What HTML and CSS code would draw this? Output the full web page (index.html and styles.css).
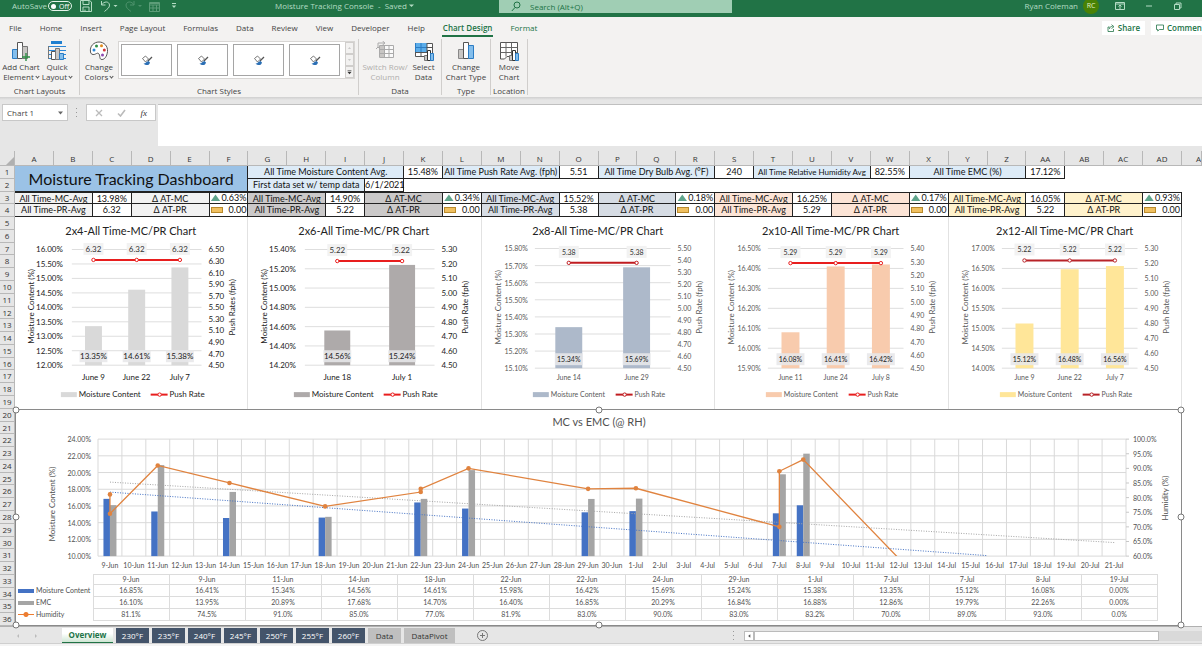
FILE: index.html
```html
<!DOCTYPE html>
<html lang="en">
<head>
<meta charset="utf-8">
<title>Moisture Tracking Console</title>
<link rel="stylesheet" href="styles.css">
</head>
<body>
<header class="titlebar">
  <div class="quick">
    <label class="autosave" for="autosave">AutoSave</label>
    <button class="toggle" id="autosave" type="button"><i></i>Off</button>
    <svg class="q-save" width="12" height="12" viewBox="0 0 12 12"><path d="M.5.5h9l2 1.500v9.500h-11zM3 .5v4h6v-4M3 11.500v-4.500h6v4.500M5 9.500v2"/></svg>
    <svg class="q-undo" width="18" height="12" viewBox="0 0 18 12"><path d="M1.500 1v4h4M1.500 5C4 1 9 1 9.500 5C9.700 8 7 9 4.500 11.500"/><path class="solid" d="M13.500 5h4l-2 2z"/></svg>
    <svg class="q-redo" width="18" height="12" viewBox="0 0 18 12"><path d="M9 1v4h-4M9 5C7 1 1.500 1 1 5C1 8 3 9 6 11.500"/><path class="solid" d="M13 5h4l-2 2z"/></svg>
    <svg class="q-table" width="12" height="11" viewBox="0 0 12 11"><path d="M.5 1.500h10v9h-10zM.5 4h10M.5 7h10M4 4v6.500M7.500 4v6.500M1 2.500h9"/></svg>
    <svg class="q-more" width="6" height="6" viewBox="0 0 6 6"><path d="M1 .5h4"/><path class="solid" d="M.8 2.500h4.400l-2.200 2.500z"/></svg>
  </div>
  <div class="doc">Moisture Tracking Console&nbsp; -&nbsp; Saved&nbsp; <svg width="5" height="4" viewBox="0 0 5 4"><path class="solid" d="M0 .5h5l-2.500 2.500z"/></svg></div>
  <div class="search">
    <svg width="10" height="11" viewBox="0 0 10 11"><circle cx="6" cy="4" r="3"/><path d="M4 6.500L.8 10"/></svg>
    <input type="text" aria-label="Search" placeholder="Search (Alt+Q)">
  </div>
  <div class="account">
    <span class="user">Ryan Coleman</span><span class="avatar">RC</span>
    <svg width="10" height="8" viewBox="0 0 10 8"><path d="M.5.5h9v7h-9zM.5 2h9M5 7V3M3.500 4.500L5 3l1.500 1.500"/></svg>
    <svg width="10" height="8" viewBox="0 0 10 8"><path d="M2 4h6"/></svg>
    <svg width="10" height="8" viewBox="0 0 10 8"><path d="M1.500 2.500h5v5h-5zM3 2.500V1h5v5H6.500"/></svg>
  </div>
</header>

<nav class="tabs">
  <button type="button">File</button><button type="button">Home</button><button type="button">Insert</button><button type="button">Page Layout</button><button type="button">Formulas</button><button type="button">Data</button><button type="button">Review</button><button type="button">View</button><button type="button">Developer</button><button type="button">Help</button><button type="button" class="ctx on">Chart Design</button><button type="button" class="ctx">Format</button>
  <span class="grow"></span>
  <button type="button" class="chip"><svg width="8" height="8" viewBox="0 0 8 8"><path d="M2.500 3H1v4.500h5.500V5M2.500 5c0-2 1-2.500 3-2.500M4.500.7l2.500 2-2.500 1.800"/></svg>Share</button>
  <button type="button" class="chip wide"><svg width="8" height="8" viewBox="0 0 8 8"><path d="M.5 1h7v4.500H3.500L1.700 7V5.500H.5z"/></svg>Comments</button>
</nav>

<section class="ribbon">
  <div class="group g-layouts">
    <div class="tools">
      <button type="button" class="tool">
        <svg width="20" height="20" viewBox="0 0 20 20"><path fill="#83beec" stroke="#2b7cc4" d="M1.500 8.500h5v9h-5z"/><path fill="#fff" stroke="#555" d="M6.500 1.500h5v16h-5z"/><path fill="#c8c6c4" stroke="#777" d="M11.500 5.500h5v12h-5z"/><path stroke="#2f8f46" stroke-width="1.400" d="M15 12v8M11 16h8"/></svg>
        <span>Add Chart<br>Element <b></b></span></button>
      <button type="button" class="tool">
        <svg width="20" height="20" viewBox="0 0 20 20"><path fill="#1e7fd0" d="M4 0h11v3H4z"/><path stroke="#2b88d8" d="M1 5.500h18M1 9.500h18M1 13.500h18M1 17.500h18"/><path stroke="#777" d="M1.500 5v13"/><path fill="#fff" stroke="#555" d="M4.500 10.500h4v8h-4z"/><path fill="#c8c6c4" stroke="#777" d="M8.500 7.500h4v11h-4z"/><path fill="#83beec" stroke="#2b7cc4" d="M12.500 12.500h4v6h-4z"/></svg>
        <span>Quick<br>Layout <b></b></span></button>
    </div>
    <h2>Chart Layouts</h2>
  </div>
  <div class="group g-styles">
    <div class="tools">
      <button type="button" class="tool">
        <svg width="20" height="20" viewBox="0 0 20 20"><path fill="#fff" stroke="#555" d="M1.500 11C.5 5 5 1 10 1s9 4 8.500 9.500C18 15.500 15.500 18.500 13 18.500c-3 0-1.500-3-3-5.500-1.500-2.300-3.500 1-6 .5C2.500 13.200 1.700 12.500 1.500 11z"/><circle cx="5" cy="9" r="1.500" fill="#2b88d8"/><circle cx="7.500" cy="5" r="1.500" fill="#2f8f46"/><circle cx="12.500" cy="4.800" r="1.500" fill="#e08a1e"/><circle cx="15.300" cy="9" r="1.500" fill="#d13438"/><circle cx="13.500" cy="14" r="1.500" fill="#8e4bb0"/></svg>
        <span>Change<br>Colors <b></b></span></button>
      <div class="gallery">
        <button type="button" aria-label="Style 1"><svg width="12" height="11" viewBox="0 0 12 11"><path fill="#fff" stroke="#555" stroke-width=".8" d="M1.500 3.500l3-2.500 3 3-3 3z"/><path stroke="#555" stroke-width="1.200" d="M7 6l4-4"/><path fill="#2b6fb5" d="M2.500 8.500c2 .5 3-2.500 5-2.500l1.500 1.500c-.5 3-4 3.500-6.500 1z"/></svg></button>
        <button type="button" aria-label="Style 2"><svg width="12" height="11" viewBox="0 0 12 11"><path fill="#fff" stroke="#555" stroke-width=".8" d="M1.500 3.500l3-2.500 3 3-3 3z"/><path stroke="#555" stroke-width="1.200" d="M7 6l4-4"/><path fill="#2b6fb5" d="M2.500 8.500c2 .5 3-2.500 5-2.500l1.500 1.500c-.5 3-4 3.500-6.500 1z"/></svg></button>
        <button type="button" aria-label="Style 3"><svg width="12" height="11" viewBox="0 0 12 11"><path fill="#fff" stroke="#555" stroke-width=".8" d="M1.500 3.500l3-2.500 3 3-3 3z"/><path stroke="#555" stroke-width="1.200" d="M7 6l4-4"/><path fill="#2b6fb5" d="M2.500 8.500c2 .5 3-2.500 5-2.500l1.500 1.500c-.5 3-4 3.500-6.500 1z"/></svg></button>
        <button type="button" aria-label="Style 4"><svg width="12" height="11" viewBox="0 0 12 11"><path fill="#fff" stroke="#555" stroke-width=".8" d="M1.500 3.500l3-2.500 3 3-3 3z"/><path stroke="#555" stroke-width="1.200" d="M7 6l4-4"/><path fill="#2b6fb5" d="M2.500 8.500c2 .5 3-2.500 5-2.500l1.500 1.500c-.5 3-4 3.500-6.500 1z"/></svg></button>
        <div class="spin">
          <svg viewBox="0 0 9 12"><path fill="#bbb" d="M2.500 7h4l-2-2z"/></svg>
          <svg viewBox="0 0 9 12"><path fill="#bbb" d="M2.500 5h4l-2 2z"/></svg>
          <svg viewBox="0 0 9 12"><path stroke="#333" d="M2 4.500h5"/><path fill="#333" d="M2 6h5l-2.500 3z"/></svg>
        </div>
      </div>
    </div>
    <h2>Chart Styles</h2>
  </div>
  <div class="group g-data">
    <div class="tools">
      <button type="button" class="tool" disabled>
        <svg width="20" height="20" viewBox="0 0 20 20"><path fill="#fafafa" stroke="#aaa" d="M4.500 4.500h14v12h-14z"/><path fill="#c8c6c4" d="M5 5h4v11H5z"/><path stroke="#aaa" d="M4.500 8.500h14M4.500 12.500h14M9.500 4.500v12M14 4.500v12M1 8l2-2 2 2M3 6v-4h6M7.500 0L10 2 7.500 4"/></svg>
        <span>Switch Row/<br>Column</span></button>
      <button type="button" class="tool">
        <svg width="20" height="20" viewBox="0 0 20 20"><path fill="#fff" stroke="#555" d="M1.500 2.500h17v13h-17z"/><path fill="#5badea" d="M1 2h12v9H1z"/><path stroke="#2b7cc4" d="M1.500 2v9M1 6.500h12M7 2v9"/><path stroke="#555" d="M13 6.500h5.500M1 11.500h12M7 11v4.500M13 2v9"/><path fill="#c8c6c4" stroke="#777" d="M10.500 14.500h3v5h-3z"/><path fill="#fff" stroke="#333" d="M13.500 9.500h3v10h-3z"/><path fill="#83beec" stroke="#2b7cc4" d="M16.500 12.500h3v7h-3z"/></svg>
        <span>Select<br>Data</span></button>
    </div>
    <h2>Data</h2>
  </div>
  <div class="group g-type">
    <div class="tools">
      <button type="button" class="tool">
        <svg width="20" height="20" viewBox="0 0 20 20"><path fill="#c8c6c4" stroke="#888" d="M2.500 8.500h5v9h-5z"/><path fill="#fff" stroke="#555" d="M7.500 1.500h5v16h-5z"/><path fill="#83beec" stroke="#2b7cc4" d="M12.500 4.500h5v13h-5z"/></svg>
        <span>Change<br>Chart Type</span></button>
    </div>
    <h2>Type</h2>
  </div>
  <div class="group g-loc">
    <div class="tools">
      <button type="button" class="tool">
        <svg width="20" height="20" viewBox="0 0 20 20"><path fill="#fff" stroke="#555" d="M1.500 1.500h17v14H8l-2.500 2.500h-4z"/><path stroke="#666" d="M1.500 6.500h17M1.500 11.500h17M7 1.500v14M12.500 1.500v14"/><path fill="#c8c6c4" stroke="#777" d="M10.500 14.500h3v5h-3z"/><path fill="#fff" stroke="#333" d="M13.500 9.500h3v10h-3z"/><path fill="#83beec" stroke="#2b7cc4" d="M16.500 12.500h3v7h-3z"/></svg>
        <span>Move<br>Chart</span></button>
    </div>
    <h2>Location</h2>
  </div>
</section>

<section class="formula">
  <div class="namebox"><input type="text" aria-label="Name box" value="Chart 1"><svg width="5" height="4" viewBox="0 0 5 4"><path fill="#666" d="M0 .5h5l-2.500 3z"/></svg></div>
  <svg class="grip" width="4" height="10" viewBox="0 0 4 10"><path fill="#999" d="M1 0h1v1H1zM1 4h1v1H1zM1 8h1v1H1z"/></svg>
  <div class="fx">
    <svg width="8" height="8" viewBox="0 0 8 8"><path stroke="#bbb" stroke-width="1.300" d="M1 1l6 6M7 1L1 7"/></svg>
    <svg width="9" height="8" viewBox="0 0 9 8"><path stroke="#bbb" stroke-width="1.600" d="M1 4.500L3.500 7 8 1"/></svg>
    <em>fx</em>
  </div>
  <textarea aria-label="Formula bar"></textarea>
</section>

<main class="sheet">
<table class="grid">
  <thead><tr id="letters"><th class="corner"><svg width="8" height="8" viewBox="0 0 8 8"><path fill="#b0b0b0" d="M8 0v8H0z"/></svg></th></tr></thead>
  <tbody id="cells">
    <tr><th>1</th>
      <td class="s6 title">Moisture Tracking Dashboard</td>
      <td class="s4 head">All Time Moisture Content Avg.</td><td>15.48%</td>
      <td class="s3 head">All Time Push Rate Avg. (fph)</td><td>5.51</td>
      <td class="s3 head">All Time Dry Bulb Avg. (°F)</td><td>240</td>
      <td class="s3 head small">All Time Relative Humidity Avg</td><td>82.55%</td>
      <td class="s3 head">All Time EMC (%)</td><td>17.12%</td></tr>
    <tr><th>2</th><td class="s3 head">First data set w/ temp data</td><td>6/1/2021</td></tr>
    <tr class="top"><th>3</th>
      <td class="s2 k1">All Time-MC-Avg</td><td>13.98%</td><td class="s2 k1">Δ AT-MC</td><td class="ind up">0.63%</td>
      <td class="s2 k2">All Time-MC-Avg</td><td>14.90%</td><td class="s2 k2">Δ AT-MC</td><td class="ind up">0.34%</td>
      <td class="s2 k3">All Time-MC-Avg</td><td>15.52%</td><td class="s2 k3">Δ AT-MC</td><td class="ind up">0.18%</td>
      <td class="s2 k4">All Time-MC-Avg</td><td>16.25%</td><td class="s2 k4">Δ AT-MC</td><td class="ind up">0.17%</td>
      <td class="s2 k5">All Time-MC-Avg</td><td>16.05%</td><td class="s2 k5">Δ AT-MC</td><td class="ind up">0.93%</td></tr>
    <tr><th>4</th>
      <td class="s2 k1">All Time-PR-Avg</td><td>6.32</td><td class="s2 k1">Δ AT-PR</td><td class="ind flat">0.00</td>
      <td class="s2 k2">All Time-PR-Avg</td><td>5.22</td><td class="s2 k2">Δ AT-PR</td><td class="ind flat">0.00</td>
      <td class="s2 k3">All Time-PR-Avg</td><td>5.38</td><td class="s2 k3">Δ AT-PR</td><td class="ind flat">0.00</td>
      <td class="s2 k4">All Time-PR-Avg</td><td>5.29</td><td class="s2 k4">Δ AT-PR</td><td class="ind flat">0.00</td>
      <td class="s2 k5">All Time-PR-Avg</td><td>5.22</td><td class="s2 k5">Δ AT-PR</td><td class="ind flat">0.00</td></tr>
  </tbody>
</table>
</main>

<footer class="sheetbar">
  <div class="arrows"><svg width="4" height="6" viewBox="0 0 4 6"><path fill="#bbb" d="M3 1v4L1 3z"/></svg><svg width="4" height="6" viewBox="0 0 4 6"><path fill="#bbb" d="M1 1v4l2-2z"/></svg></div>
  <button type="button" class="active">Overview</button>
  <button type="button" class="dark">230°F</button><button type="button" class="dark">235°F</button><button type="button" class="dark">240°F</button><button type="button" class="dark">245°F</button><button type="button" class="dark">250°F</button><button type="button" class="dark">255°F</button><button type="button" class="dark">260°F</button>
  <button type="button" class="gray">Data</button><button type="button" class="gray pivot">DataPivot</button>
  <svg class="plus" width="11" height="11" viewBox="0 0 11 11"><circle cx="5.500" cy="5.500" r="5"/><path d="M5.500 3v5M3 5.500h5"/></svg>
  <span class="grow"></span>
  <svg class="grip" width="4" height="10" viewBox="0 0 4 10"><path fill="#999" d="M1 0h1v1H1zM1 4h1v1H1zM1 8h1v1H1z"/></svg>
  <div class="hscroll"><svg width="9" height="8" viewBox="0 0 9 8"><path fill="#555" d="M6 2v4L3.500 4z"/></svg><i></i></div>
</footer>
<script src="charts.js"></script>
</body>
</html>
```
FILE: styles.css
```css
* { box-sizing: border-box; }
body { margin: 0; height: 100vh; display: flex; flex-direction: column; overflow: hidden; background: #e6e6e6; color: #444; font: 8px/10px "Open Sans", "Noto Sans", sans-serif; }
button, input, textarea { font: inherit; color: inherit; border: 0; margin: 0; padding: 0; background: none; outline: 0; }
svg { display: block; fill: none; flex: none; }
.grow { flex: 1; }

.titlebar { flex: none; height: 17px; padding-bottom: 5px; display: flex; align-items: center; background: #217346; color: #b4dcc4; white-space: nowrap; }
.titlebar svg { stroke: #b4dcc4; }
.titlebar .solid { fill: #b4dcc4; stroke: none; }
.quick { width: 275px; display: flex; align-items: center; padding-left: 12px; }
.autosave { width: 36px; }
.toggle { width: 24px; height: 10px; border: 1px solid #e4f3ea; border-radius: 5px; color: #fff; font-size: 7px; line-height: 7px; display: flex; align-items: center; gap: 3px; padding-left: 2px; }
.toggle i { width: 5px; height: 5px; border-radius: 50%; background: #fff; }
.q-save { margin-left: 8px; }
.q-undo { margin-left: 8px; }
.q-redo { margin-left: 7px; opacity: .3; }
.q-table { margin-left: 6px; opacity: .4; }
.q-more { margin-left: 10px; }
.doc { width: 224px; display: flex; align-items: center; }
.search { width: 233px; height: 13px; background: #a0ceb4; display: flex; align-items: center; gap: 9px; padding-left: 12px; align-self: flex-start; }
.search svg { stroke: #217346; }
.search input { flex: 1; min-width: 0; }
.search input::placeholder { color: #217346; opacity: 1; }
.account { flex: 1; display: flex; align-items: center; justify-content: flex-end; padding-right: 19px; gap: 19px; }
.account .user { margin-right: -14px; }
.avatar { width: 16px; height: 16px; border-radius: 50%; background: #498205; color: #e3f0c8; text-align: center; line-height: 16px; font-size: 7px; margin-right: -3px; }

.tabs { flex: none; height: 22px; background: #f3f2f1; display: flex; align-items: center; white-space: nowrap; overflow: hidden; }
.tabs button { height: 18px; padding: 0 9px; position: relative; }
.tabs .ctx { color: #217346; }
.tabs .on { font-weight: 600; }
.tabs .on::after { content: ""; position: absolute; left: 8px; right: 8px; bottom: 0; height: 2px; background: #217346; }
.tabs .chip { height: 14px; background: #fff; color: #217346; font-weight: 600; display: flex; align-items: center; gap: 3px; padding: 0 5px; margin-right: 6px; }
.tabs .chip svg { stroke: #217346; stroke-width: .8; }
.tabs .wide { margin-right: -12px; }

.ribbon { flex: none; height: 58px; background: #f3f2f1; display: flex; }
.group { display: flex; flex-direction: column; border-right: 1px solid #d0cecc; margin-bottom: 2px; }
.group h2 { margin: auto 0 0; font: inherit; text-align: center; line-height: 8px; }
.g-layouts { width: 80px; } .g-styles { width: 279px; } .g-data { width: 83px; } .g-type { width: 49px; } .g-loc { width: 37px; }
.tools { display: flex; justify-content: center; padding-top: 2px; }
.g-layouts .tools { justify-content: flex-start; padding-left: 3px; }
.g-styles .tools { justify-content: flex-start; }
.g-data .tools { justify-content: flex-start; padding-left: 5px; }
.tool { width: 38px; display: flex; flex-direction: column; align-items: center; white-space: nowrap; }
.g-layouts .tool, .g-data .tool { width: 36px; }
.tool span { margin-top: 1px; }
.g-data .tool:disabled { color: #b0aeac; width: 42px; }
.tool b { display: inline-block; width: 3px; height: 3px; border: solid #555; border-width: 0 1px 1px 0; transform: translateY(-2px) rotate(45deg); }
.gallery { height: 38px; border: 1px solid #d8d6d4; background: #fff; display: flex; gap: 5px; padding: 2px 0 2px 2px; }
.gallery button { width: 51px; height: 32px; border: 1px solid #a5a5a5; display: flex; align-items: center; justify-content: center; }
.spin { width: 9px; margin: -2px 0; display: grid; grid-template-rows: repeat(3, 12px); background: #f3f2f1; }
.spin svg { border: 1px solid #d0cecc; width: 9px; height: 12px; }

.formula { flex: none; height: 54px; padding: 7px 0 5px 2px; display: flex; background: linear-gradient(#cfcfcf, #e6e6e6 3px); }
.namebox, .fx { height: 17px; border: 1px solid #c8c8c8; background: #fff; display: flex; align-items: center; }
.namebox { width: 66px; padding: 0 4px; }
.namebox input { flex: 1; min-width: 0; }
.formula .grip { margin: 4px 7px; }
.fx { width: 70px; justify-content: space-between; padding: 0 8px; }
.fx em { font: italic 9px/10px "Liberation Serif", serif; color: #333; }
.formula textarea { flex: 1; margin-left: 2px; background: #fff; border-top: 1px solid #c0c0c0; resize: none; }

.sheet { flex: 1; min-height: 0; background: #fff; display: flex; font-family: Lato, "Open Sans", sans-serif; color: #111; }
.grid { flex: 1; display: grid; grid-template-columns: 15px repeat(30, minmax(0, 1fr)) 20px; grid-template-rows: 15px repeat(36, minmax(0, 1fr)); }
.grid > thead, .grid > tbody, .grid > thead > tr, .grid > tbody > tr { display: contents; }
.grid th { font: 8px/12px "Open Sans", sans-serif; color: #333; background: #e6e6e6; padding: 0; text-align: center; border: 0 solid #b8b8b8; border-width: 0 1px 1px 0; overflow: hidden; }
.grid > thead > tr > th { line-height: 15px; }
.grid > tbody > tr > th { grid-column: 1; }
.grid th.last { text-align: left; padding-left: 14px; }
.corner { display: flex; align-items: flex-end; justify-content: flex-end; }
.grid > tbody > tr > td { padding: 0; border: 0 solid #222; border-width: 0 1px 1px 0; font-size: 9px; line-height: 12px; text-align: center; white-space: nowrap; min-width: 0; min-height: 0; }
.grid .top > td { border-top-width: 1px !important; line-height: 11px !important; }
.s2 { grid-column: span 2; } .s3 { grid-column: span 3; } .s4 { grid-column: span 4; }
.grid > tbody > tr > td.title { grid-column: span 6; grid-row: span 2; background: #9bc2e6; font-size: 16px; line-height: 25px; }
.head { background: #ddebf7; }
.grid td.small { font-size: 8px !important; }
.k1 { background: #f2f2f2; } .k2 { background: #cbc9c9; } .k3 { background: #d6dce4; } .k4 { background: #fce4d6; } .k5 { background: #fff2cc; }
.grid td.ind { text-align: right !important; display: flex; align-items: center; justify-content: space-between; padding: 0 1px !important; }
.ind::before { content: ""; width: 10px; height: 7px; background: #5fa58c; clip-path: polygon(50% 0, 100% 100%, 0 100%); }
.grid td.flat::before { height: 4px; clip-path: none; background: #f0c060; border: 1px solid #b98a2c; }
.grid > tbody > tr > td.chart { grid-column: span 6; grid-row: span 15; border: 0; border-right: 1px solid #e2e2e2; }
.chart svg { width: 100%; height: 100%; }
.grid > tbody > tr > td.wide-chart { grid-column: span 30; grid-row: span 17; border: 1px solid #8a8a8a; position: relative; display: flex; flex-direction: column; }
.wide-chart svg { width: 100%; flex: 1; min-height: 0; }
.handle { position: absolute; width: 7px; height: 7px; border: 1px solid #777; border-radius: 50%; background: #fff; transform: translate(-50%, -50%); }
svg text { font-family: Lato, sans-serif; }
.datatable { width: 98%; margin-bottom: 4px; border-collapse: collapse; table-layout: fixed; }
.datatable td, .grid .datatable th { border: 1px solid #dcdcdc; padding: 0; text-align: center; font: 7px/9px Lato, sans-serif; color: #505050; background: none; }
.grid .datatable th:first-child { width: 77px; text-align: left; border-width: 0 1px 0 0; white-space: nowrap; }
.datatable tbody td, .grid .datatable tbody th { line-height: 11px; }
.key { display: inline-block; width: 16px; height: 4px; margin: 0 2px 1px 2px; vertical-align: middle; }
.key.mc { background: #4472c4; } .key.emc { background: #a5a5a5; }
.key.hum { height: 5px; background: radial-gradient(circle, #ed7d31 2px, transparent 3px), linear-gradient(transparent 2px, #ed7d31 2px, #ed7d31 3px, transparent 3px); }

.sheetbar { flex: none; height: 20px; border-top: 1px solid #b0b0b0; background: #e6e6e6; display: flex; align-items: center; padding-bottom: 2px; box-shadow: inset 0 -2px #f4f4f4, inset 0 -3px #cfcfcf; }
.arrows { width: 62px; display: flex; gap: 14px; padding-left: 16px; }
.sheetbar button { height: 15px; font-size: 8px; line-height: 14px; margin-right: 3px; text-align: center; white-space: nowrap; }
.sheetbar .active { width: 51px; font-weight: 700; color: #217346; background: linear-gradient(#fff 40%, #cfe6d4); border-bottom: 1px solid #217346; margin-right: 3px; }
.sheetbar .dark { width: 33px; background: #44546a; color: #fff; }
.sheetbar .gray { width: 33px; background: #bfbfbf; color: #333; }
.sheetbar .pivot { width: 51px; }
.plus { margin-left: 19px; stroke: #777; }
.hscroll { margin-left: 8px; width: 458px; height: 10px; display: flex; background: #d9d9d9; }
.hscroll svg { background: #fff; border: 1px solid #bbb; width: 10px; height: 10px; }
.hscroll i { width: 405px; background: #fff; border: 1px solid #bbb; }
```
FILE: charts.js
```js
const NS = "http://www.w3.org/2000/svg";
function el(parent, name, attrs, text) {
  const n = document.createElementNS(NS, name);
  for (const k in attrs) n.setAttribute(k, attrs[k]);
  if (text !== undefined) n.textContent = text;
  parent.appendChild(n);
  return n;
}
function html(parent, name, cls, text) {
  const n = document.createElement(name);
  if (cls) n.className = cls;
  if (text !== undefined) n.textContent = text;
  parent.appendChild(n);
  return n;
}

const letters = document.getElementById("letters");
for (let i = 0; i < 31; i++) {
  const name = (i > 25 ? "A" : "") + String.fromCharCode(65 + i % 26);
  html(letters, "th", i === 30 ? "last" : "", name);
}

const small = [
  { t: "2x4", color: "#d9d9d9", line: "#e81e1e", lo: 12, hi: 16, step: .5, rlo: 4.5, rhi: 6.5, rstep: .2, rt: "Push Rates (fph)", pr: 6.32, d: [["June 9", 13.35], ["June 22", 14.61], ["July 7", 15.38]], dark: true },
  { t: "2x6", color: "#aeaaaa", line: "#e81e1e", lo: 14.2, hi: 15.4, step: .2, rlo: 4.5, rhi: 5.3, rstep: .1, rt: "Push Rate (fph)", pr: 5.22, d: [["June 18", 14.56], ["July 1", 15.24]], dark: true },
  { t: "2x8", color: "#adb9ca", line: "#c01c20", lo: 15.1, hi: 15.8, step: .1, rlo: 4.5, rhi: 5.5, rstep: .1, rt: "Push Rate (fph)", pr: 5.38, d: [["June 14", 15.34], ["June 29", 15.69]] },
  { t: "2x10", color: "#f8cbad", line: "#e81e1e", lo: 15.9, hi: 16.5, step: .1, rlo: 4.5, rhi: 5.4, rstep: .1, rt: "Push Rate (fph)", pr: 5.29, d: [["June 11", 16.08], ["June 24", 16.41], ["July 8", 16.42]] },
  { t: "2x12", color: "#ffe699", line: "#b82328", lo: 14, hi: 17, step: .5, rlo: 4.5, rhi: 5.3, rstep: .1, rt: "Push Rate (fph)", pr: 5.22, d: [["June 9", 15.12], ["June 22", 16.48], ["July 7", 16.56]] }
];

function smallChart(td, c) {
  const s = el(td, "svg", { viewBox: "0 0 233 191" });
  const x0 = c.dark ? 57 : 53, x1 = c.dark ? 187 : 189;
  const y0 = c.dark ? 32 : 31, y1 = c.dark ? 148 : 151;
  const fs = c.dark ? 8 : 7, ink = c.dark ? "#222" : "#595959";
  const Y = v => y1 - (v - c.lo) / (c.hi - c.lo) * (y1 - y0);
  const R = v => y1 - (v - c.rlo) / (c.rhi - c.rlo) * (y1 - y0);
  const T = (x, y, a, t, size) => el(s, "text", { x, y, "text-anchor": a, "font-size": size || fs, fill: ink }, t);
  el(s, "text", { x: 116, y: 17, "text-anchor": "middle", "font-size": 11, fill: "#222" }, c.t + "-All Time-MC/PR Chart");
  for (let v = c.lo; v < c.hi + .01; v += c.step) {
    el(s, "line", { x1: x0, x2: x1, y1: Y(v), y2: Y(v), stroke: "#dedede" });
    T(c.dark ? 48 : 46, Y(v) + 3, "end", v.toFixed(2) + "%");
  }
  for (let v = c.rlo; v < c.rhi + .01; v += c.rstep) T(c.dark ? 194 : 196, R(v) + 3, "start", v.toFixed(2));
  const cw = (x1 - x0) / c.d.length, bw = Math.round(cw * .4);
  const cx = i => x0 + cw * (i + .5);
  c.d.forEach((p, i) => {
    el(s, "rect", { x: cx(i) - bw / 2, y: Y(p[1]), width: bw, height: y1 - Y(p[1]), fill: c.color });
    const ly = c.dark ? 139 : 142;
    el(s, "rect", { x: cx(i) - 14, y: ly - 6, width: 28, height: 12, fill: "#e7e7e9", "fill-opacity": .88 });
    el(s, "text", { x: cx(i), y: ly + 3, "text-anchor": "middle", "font-size": fs, fill: "#222" }, p[1].toFixed(2) + "%");
    T(cx(i), 163, "middle", p[0]);
    el(s, "rect", { x: cx(i) - 10, y: R(c.pr) - 17, width: 20, height: 12, fill: "#f2f2f2" });
    el(s, "text", { x: cx(i), y: R(c.pr) - 8, "text-anchor": "middle", "font-size": fs, fill: "#333" }, c.pr.toFixed(2));
  });
  const ry = R(c.pr);
  el(s, "line", { x1: cx(0), x2: cx(c.d.length - 1), y1: ry, y2: ry, stroke: c.line, "stroke-width": 2 });
  c.d.forEach((p, i) => el(s, "circle", { cx: cx(i), cy: ry, r: 1.7, fill: "#fff", stroke: c.line }));
  const rot = (x, y, t) => el(s, "text", { transform: `translate(${x} ${y}) rotate(-90)`, "text-anchor": "middle", "font-size": 8, fill: ink }, t);
  rot(19, c.dark ? 89 : 90, "Moisture Content (%)");
  rot(221, 90, c.rt);
  const lx = c.dark ? 46 : 51, px = c.dark ? 136 : 134;
  el(s, "rect", { x: lx, y: 175, width: 16, height: 5, fill: c.color });
  T(lx + 18, 180, "start", "Moisture Content");
  el(s, "line", { x1: px, x2: px + 17, y1: 177.5, y2: 177.5, stroke: c.line, "stroke-width": 2 });
  el(s, "circle", { cx: px + 9, cy: 177.5, r: 1.7, fill: "#fff", stroke: c.line });
  T(px + 19, 180, "start", "Push Rate");
}

const table = [
  ["9-Jun", 16.85, 16.10, 81.1], ["9-Jun", 16.41, 13.95, 74.5], ["11-Jun", 15.34, 20.89, 91], ["14-Jun", 14.56, 17.68, 85],
  ["18-Jun", 14.61, 14.70, 77], ["22-Jun", 15.98, 16.40, 81.9], ["22-Jun", 16.42, 16.85, 83], ["24-Jun", 15.69, 20.29, 90],
  ["29-Jun", 15.24, 16.84, 83], ["1-Jul", 15.38, 16.88, 83.2], ["7-Jul", 13.35, 12.86, 70], ["7-Jul", 15.12, 19.79, 89],
  ["8-Jul", 16.08, 22.26, 93], ["19-Jul", 0, 0, 0]
];
const dayOf = s => { const [d, m] = s.split("-"); return +d - 9 + (m === "Jul" ? 30 : 0); };

function wideChart(td) {
  const s = el(td, "svg", { viewBox: "0 0 1165 164" });
  const x0 = 82, x1 = 1110, y0 = 29, y1 = 146, cw = (x1 - x0) / 43;
  const X = i => x0 + cw * (i + .5);
  const Y = v => y1 - (v - 10) / 14 * (y1 - y0);
  const H = v => y1 - (v - 60) / 40 * (y1 - y0);
  const T = (x, y, a, t) => el(s, "text", { x, y, "text-anchor": a, "font-size": 7, fill: "#505050" }, t);
  el(s, "text", { x: 583, y: 16, "text-anchor": "middle", "font-size": 11, fill: "#505050" }, "MC vs EMC (@ RH)");
  for (let v = 10; v <= 24; v += 2) {
    el(s, "line", { x1: x0, x2: x1, y1: Y(v), y2: Y(v), stroke: "#d9d9d9" });
    T(75, Y(v) + 3, "end", v.toFixed(2) + "%");
  }
  for (let i = 0; i <= 43; i++) el(s, "line", { x1: x0 + cw * i, x2: x0 + cw * i, y1: y0, y2: y1, stroke: "#d9d9d9" });
  for (let i = 0; i < 43; i++) T(X(i), 158, "middle", i < 22 ? (i + 9) + "-Jun" : (i - 21) + "-Jul");
  for (let v = 60; v <= 100; v += 5) {
    el(s, "line", { x1: x1, x2: x1 + 3, y1: H(v), y2: H(v), stroke: "#c8c8c8" });
    T(1117, H(v) + 3, "start", v.toFixed(1) + "%");
  }
  [0, 2, 3, 4, 6, 7, 8, 9, 11, 12].forEach(k => {
    const [d, mc, emc] = table[k], x = X(dayOf(d));
    el(s, "rect", { x: x - 6.5, y: Y(mc), width: 6.5, height: y1 - Y(mc), fill: "#4472c4" });
    el(s, "rect", { x, y: Y(emc), width: 6.5, height: y1 - Y(emc), fill: "#a5a5a5" });
  });
  el(s, "line", { x1: 94, y1: 72, x2: 1099, y2: 132.5, stroke: "#a5a5a5", "stroke-dasharray": "1 1.5" });
  el(s, "line", { x1: 94, y1: 82, x2: 971, y2: 145.5, stroke: "#4472c4", "stroke-dasharray": "1 1.5" });
  const clip = el(el(s, "defs", {}), "clipPath", { id: "plot" });
  el(clip, "rect", { x: x0, y: y0, width: x1 - x0, height: y1 - y0 });
  const g = el(s, "g", { "clip-path": "url(#plot)" });
  const pts = table.map(r => [X(dayOf(r[0])), H(r[3])]);
  el(g, "polyline", { points: pts.map(p => p.join(",")).join(" "), stroke: "#e0833f", "stroke-width": 1.3 });
  pts.forEach(p => el(g, "circle", { cx: p[0], cy: p[1], r: 2.3, fill: "#e0833f" }));
  const rot = (x, y, t) => el(s, "text", { transform: `translate(${x} ${y}) rotate(-90)`, "text-anchor": "middle", "font-size": 8, fill: "#505050" }, t);
  rot(39, 94, "Moisture Content (%)");
  rot(1152, 88, "Humidity (%)");

  const t = html(td, "table", "datatable");
  const hr = html(html(t, "thead"), "tr");
  html(hr, "th", "");
  table.forEach(r => html(hr, "td", "", r[0]));
  const body = html(t, "tbody");
  [["mc", "Moisture Content", 1, 2], ["emc", "EMC", 2, 2], ["hum", "Humidity", 3, 1]].forEach(([cls, name, k, dp]) => {
    const tr = html(body, "tr"), th = html(tr, "th");
    html(th, "i", "key " + cls);
    th.append(name);
    table.forEach(r => html(tr, "td", "", r[k].toFixed(dp) + "%"));
  });
  [[0, 0], [50, 0], [100, 0], [0, 50], [100, 50], [0, 100], [50, 100], [100, 100]].forEach(([x, y]) => {
    const h = html(td, "i", "handle");
    h.style.left = x + "%";
    h.style.top = y + "%";
  });
}

const cells = document.getElementById("cells");
for (let r = 5; r <= 36; r++) {
  const tr = html(cells, "tr");
  html(tr, "th", "", r);
  if (r === 5) small.forEach(c => smallChart(html(tr, "td", "chart"), c));
  if (r === 20) wideChart(html(tr, "td", "wide-chart"));
}
```
